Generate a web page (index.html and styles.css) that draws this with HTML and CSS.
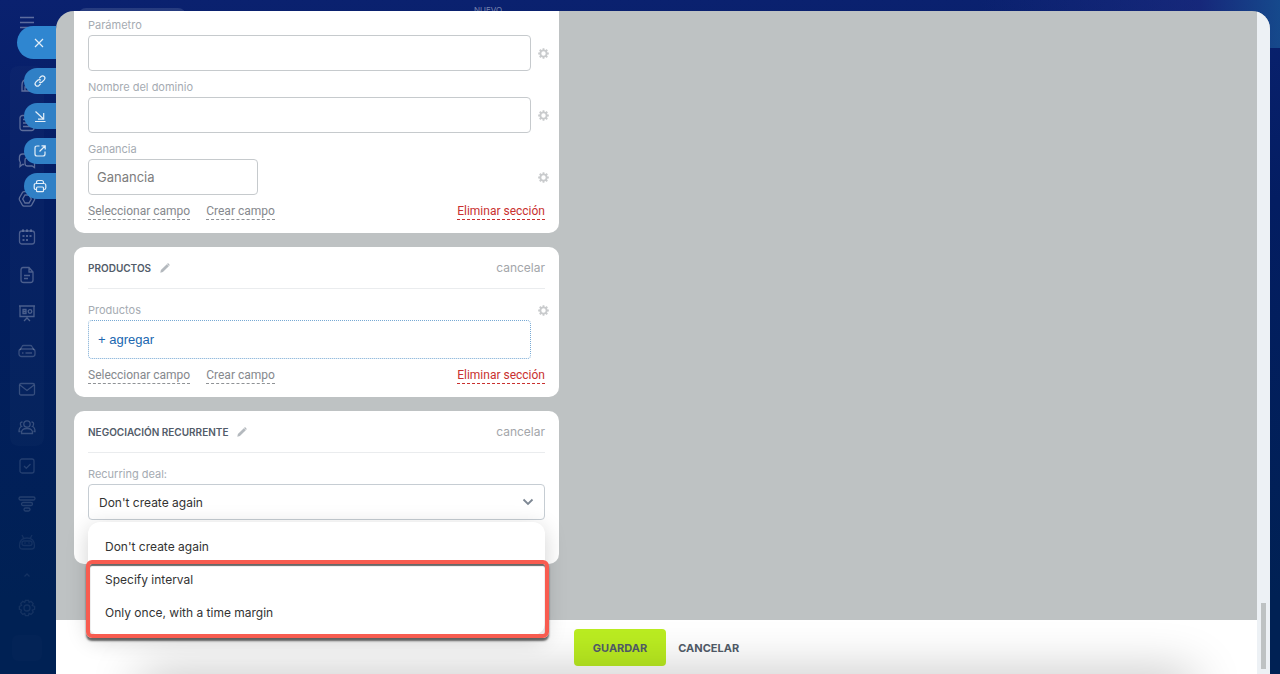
FILE: index.html
```
<!DOCTYPE html>
<html lang="es">
<head>
  <meta charset="UTF-8" />
  <meta name="viewport" content="width=device-width, initial-scale=1.0"/>
  <title>Negociación</title>
  <link rel="stylesheet" href="styles.css">
</head>
<body>

  <!-- Shared icons -->
  <svg class="sprite" aria-hidden="true">
    <symbol id="gear" viewBox="0 0 12 12">
      <circle cx="6" cy="6" r="3.4" fill="none" stroke="currentColor" stroke-width="2"/>
      <path d="M6 .2v2M6 9.800v2M.2 6h2M9.800 6h2M1.900 1.900l1.500 1.500M8.600 8.600l1.500 1.500M1.900 10.100l1.500-1.500M8.600 3.400l1.500-1.500" stroke="currentColor" stroke-width="2"/>
    </symbol>
    <symbol id="pencil" viewBox="0 0 10 10">
      <path d="M.3 9.700l.6-2.600L6.800 1.200l2 2-5.900 5.900zM7.400.6q.6-.6 1.200 0l.8.8q.6.600 0 1.200l-.3.300-2-2z" fill="currentColor"/>
    </symbol>
  </svg>

  <!-- Left menu -->
  <nav class="sidebar">
    <button class="side-item burger" aria-label="Menu">
      <svg viewBox="0 0 18 18"><path d="M2 4.500h14M2 9.500h14M2 14.500h14"/></svg>
    </button>
    <div class="side-group">
      <a href="#" class="side-item" aria-label="Feed"><svg viewBox="0 0 18 18"><path d="M4 15V9q0-5 5-6 5 1 5 6v6zM7 15v-4h4v4"/></svg></a>
      <a href="#" class="side-item" aria-label="News"><svg viewBox="0 0 18 18"><rect x="2" y="1.500" width="14" height="15" rx="2.500"/><path d="M5 5.500h5M5 9h8M5 12.500h8"/></svg></a>
      <a href="#" class="side-item" aria-label="Chat"><svg viewBox="0 0 18 18"><path d="M6 12.500H4.500L2 14.500l.3-4Q.8 8 1.500 4.500 2 2 4.500 2H10q2.500 0 2.500 2M8.500 6H14q2.500 0 2.500 2.500v7L14 14H9.500Q7 14 7 11.500V8q0-2 1.500-2z"/></svg></a>
      <a href="#" class="side-item" aria-label="Apps"><svg viewBox="0 0 18 18"><path d="M6 1.700h6q1 0 1.600 1l2.900 5q.5 1 0 2.200l-2.900 5.200q-.6 1-1.600 1H6q-1 0-1.600-1L1.500 10q-.5-1.200 0-2.300l2.900-5q.6-1 1.600-1zM7 5h4l2.300 4L11 13H7L4.700 9z"/></svg></a>
      <a href="#" class="side-item" aria-label="Calendar"><svg viewBox="0 0 18 18"><rect x="1.500" y="3" width="15" height="13" rx="2.500"/><path d="M5 1v3M9 1v3M13 1v3"/><path d="M4.500 8h2M8 8h2M11.500 8h2M4.500 12h2M8 12h2" stroke-width="2"/></svg></a>
      <a href="#" class="side-item" aria-label="Documents"><svg viewBox="0 0 18 18"><path d="M5 1.500h6L15 6v8q0 2.500-2.500 2.500h-7Q3 16.500 3 14V4q0-2.500 2-2.500zM11 1.500V6h4M6 9.500h6M6 12.500h4"/></svg></a>
      <a href="#" class="side-item" aria-label="Boards"><svg viewBox="0 0 18 18"><path d="M1 2h16M2 2v10.500h14V2M5 5.500h3v4H5zM5 7.500h3M9 12.500V14M6 17l3-3 3 3"/><circle cx="12" cy="7.500" r="1.800"/></svg></a>
      <a href="#" class="side-item" aria-label="Drive"><svg viewBox="0 0 18 18"><path d="M2 8l2-3.500q.5-1 1.500-1h7q1 0 1.500 1L16 8"/><rect x="1" y="7" width="16" height="7.500" rx="2.500"/><path d="M4 11h1.500M7.500 11H14"/></svg></a>
      <a href="#" class="side-item" aria-label="Mail"><svg viewBox="0 0 18 18"><rect x="1.500" y="3.500" width="15" height="11.500" rx="1.500"/><path d="M2 5l7 5.500L16 5"/></svg></a>
      <a href="#" class="side-item" aria-label="Groups"><svg viewBox="0 0 18 18"><circle cx="9" cy="6" r="3.200"/><path d="M3.500 15.500q-.5-5 5.500-5t5.500 5zM4.500 4Q2 4 2.500 6.500q.2 1.500 1 2Q1 9.500 1 13.500h1.500M13.500 4q2.500 0 2 2.500-.2 1.500-1 2 2.500 1 2.500 5h-1.500"/></svg></a>
    </div>
    <a href="#" class="side-item dim" aria-label="Tasks"><svg viewBox="0 0 18 18"><rect x="2" y="2" width="14" height="14" rx="2"/><path d="M6 9l2.300 2.300L12.500 7"/></svg></a>
    <a href="#" class="side-item dim" aria-label="CRM"><svg viewBox="0 0 18 18"><rect x="1" y="2" width="16" height="3" rx="1.500"/><rect x="3.500" y="7.500" width="11" height="3" rx="1.500"/><rect x="6" y="13" width="6" height="3" rx="1.500"/></svg></a>
    <a href="#" class="side-item dimmer" aria-label="Robots"><svg viewBox="0 0 18 18"><path d="M4 2l1.500 3M14 2l-1.500 3M1.500 13q0-8 7.500-8t7.500 8q0 3-3 3h-9q-3 0-3-3z"/><rect x="4" y="8" width="10" height="4.500" rx="2"/><path d="M6.500 10.500l1-1M10.500 9.500l1 1"/></svg></a>
    <button class="side-item dimmer small" aria-label="More"><svg viewBox="0 0 18 18"><path d="M6.500 10.500L9 8l2.500 2.500"/></svg></button>
    <a href="#" class="side-item dimmer" aria-label="Settings"><svg viewBox="0 0 18 18"><circle cx="9" cy="9" r="3"/><path d="M7.500 1.300h3l.6 2 1.900-.9 2.200 2.200-.9 1.900 2.300.9v3l-2.300.8.900 2-2.200 2.200-1.900-.9-.7 2.200h-3l-.7-2.200-1.900.9-2.100-2.200.8-2-2.100-.8v-3l2.100-.9-.8-1.900 2.100-2.200 1.900.9z"/></svg></a>
    <div class="side-stub"></div>
  </nav>

  <!-- Page header behind the slider -->
  <header class="topbar">
    <div class="search"></div>
    <span class="badge">NUEVO</span>
  </header>

  <!-- Slider buttons -->
  <div class="slider-buttons">
    <button class="slider-btn close" aria-label="Cerrar"><svg viewBox="0 0 14 14"><path d="M3 3l8 8M11 3l-8 8"/></svg></button>
    <button class="slider-btn" aria-label="Copiar enlace"><svg viewBox="0 0 14 14"><path d="M6.200 4.300L8 2.500q1.600-1.400 3.200 0t0 3.300L9.300 7.700q-1.600 1.500-3.200 0M7.800 9.700L6 11.500q-1.600 1.400-3.200 0t0-3.300l1.900-1.900q1.600-1.500 3.200 0"/></svg></button>
    <button class="slider-btn" aria-label="Minimizar"><svg viewBox="0 0 14 14"><path d="M2.500 2.500l8 7.500M10.700 4v6.200H5M2 12.500h10.500"/></svg></button>
    <button class="slider-btn" aria-label="Abrir en ventana nueva"><svg viewBox="0 0 14 14"><path d="M6.500 2H4Q2 2 2 4v6q0 2 2 2h6q2 0 2-2V7.500M6.500 7.500L12 2M8.500 1.800h3.700v3.700"/></svg></button>
    <button class="slider-btn" aria-label="Imprimir"><svg viewBox="0 0 14 14"><path d="M3.500 4.500v-1q0-2 2-2h3q2 0 2 2v1M3.500 10.500H3q-1.800 0-1.800-1.800V6.500Q1.200 4.500 3 4.500h8q1.800 0 1.800 2v2.200q0 1.800-1.800 1.800h-.5"/><rect x="3.500" y="8" width="7" height="4.700" rx="1"/></svg></button>
  </div>

  <!-- Slider -->
  <div class="slider">
    <div class="slider-page">
      <main class="content">

        <section class="card card-cut">
          <div class="field">
            <label for="param">Parámetro</label>
            <div class="field-row">
              <input type="text" id="param">
              <button class="gear" aria-label="Configurar"><svg><use href="#gear"/></svg></button>
            </div>
          </div>
          <div class="field">
            <label for="domain">Nombre del dominio</label>
            <div class="field-row">
              <input type="text" id="domain">
              <button class="gear" aria-label="Configurar"><svg><use href="#gear"/></svg></button>
            </div>
          </div>
          <div class="field">
            <label for="gain">Ganancia</label>
            <div class="field-row">
              <input type="text" id="gain" class="short" placeholder="Ganancia">
              <button class="gear" aria-label="Configurar"><svg><use href="#gear"/></svg></button>
            </div>
          </div>
          <div class="links">
            <a href="#">Seleccionar campo</a>
            <a href="#">Crear campo</a>
            <a href="#" class="remove">Eliminar sección</a>
          </div>
        </section>

        <section class="card">
          <div class="card-header">
            <h2>Productos</h2>
            <button class="edit" aria-label="Editar"><svg><use href="#pencil"/></svg></button>
            <a href="#" class="cancel">cancelar</a>
          </div>
          <div class="field">
            <div class="field-row label-row">
              <span class="label">Productos</span>
              <button class="gear" aria-label="Configurar"><svg><use href="#gear"/></svg></button>
            </div>
            <button class="add">+ agregar</button>
          </div>
          <div class="links">
            <a href="#">Seleccionar campo</a>
            <a href="#">Crear campo</a>
            <a href="#" class="remove">Eliminar sección</a>
          </div>
        </section>

        <section class="card card-recurring">
          <div class="card-header">
            <h2>Negociación recurrente</h2>
            <button class="edit" aria-label="Editar"><svg><use href="#pencil"/></svg></button>
            <a href="#" class="cancel">cancelar</a>
          </div>
          <div class="field">
            <label for="recurring">Recurring deal:</label>
            <div class="select">
              <select id="recurring">
                <option>Don't create again</option>
                <option>Specify interval</option>
                <option>Only once, with a time margin</option>
              </select>
              <svg class="chevron" viewBox="0 0 12 8"><path d="M1.500 1.500L6 6l4.500-4.500"/></svg>
              <div class="menu">
                <button>Don't create again</button>
                <button>Specify interval</button>
                <button>Only once, with a time margin</button>
                <div class="highlight"></div>
              </div>
            </div>
          </div>
        </section>

      </main>

      <footer class="footer">
        <button class="save">Guardar</button>
        <button class="dismiss">Cancelar</button>
      </footer>
    </div>
    <div class="scrollbar"><div class="thumb"></div></div>
  </div>

</body>
</html>
```
FILE: styles.css
```
* {
  box-sizing: border-box;
  font-family: Inter, "Liberation Sans", sans-serif;
}
body {
  margin: 0;
  min-height: 100vh;
  display: grid;
  grid-template-columns: 56px 1fr 10px;
  grid-template-rows: 11px 1fr;
  position: relative;
  background:
    linear-gradient(to left, rgba(30, 100, 160, 0.6), rgba(40, 50, 140, 0.4) 80px, transparent 300px) top / 100% 48px no-repeat,
    linear-gradient(to bottom, #0a216f, #031d62 200px, #002154 600px);
}
button {
  padding: 0;
  border: none;
  background: none;
  cursor: pointer;
}
.sprite {
  position: absolute;
  width: 0;
  height: 0;
}

/* === Left menu === */
.sidebar {
  grid-row: 1 / 3;
  display: flex;
  flex-direction: column;
  align-items: center;
  padding: 3px 2px 0 0;
  color: rgba(255, 255, 255, 0.34);
}
.side-group {
  width: 34px;
  margin: 25px 0 1px;
  border-radius: 8px;
  background: rgba(255, 255, 255, 0.02);
}
.side-item {
  display: flex;
  align-items: center;
  justify-content: center;
  height: 38px;
  color: inherit;
}
.side-item svg {
  width: 18px;
  height: 18px;
  fill: none;
  stroke: currentColor;
  stroke-width: 1.3;
}
.side-group .side-item:nth-child(n+5) { color: rgba(255, 255, 255, 0.28); }
.side-group .side-item:nth-child(n+8) { color: rgba(255, 255, 255, 0.2); }
.dim { color: rgba(255, 255, 255, 0.14); }
.dimmer { color: rgba(255, 255, 255, 0.08); }
.small { height: 28px; }
.side-stub {
  width: 30px;
  height: 26px;
  margin-top: 8px;
  border-radius: 6px;
  background: rgba(255, 255, 255, 0.01);
}

/* === Header behind the slider === */
.topbar {
  grid-column: 2 / 4;
  display: flex;
  overflow: hidden;
}
.search {
  width: 108px;
  height: 30px;
  margin: 8px 0 0 22px;
  border-radius: 8px;
  background: rgba(255, 255, 255, 0.12);
}
.badge {
  margin: 4px 0 0 288px;
  font-size: 8px;
  line-height: 12px;
  color: rgba(255, 255, 255, 0.45);
}

/* === Slider buttons === */
.slider-buttons {
  position: absolute;
  top: 26px;
  left: 0;
  width: 56px;
  display: flex;
  flex-direction: column;
  align-items: flex-end;
  gap: 9px;
}
.slider-btn {
  display: flex;
  align-items: center;
  width: 32px;
  height: 26px;
  padding-left: 9px;
  border-radius: 13px 0 0 13px;
  background: #3080c6;
}
.slider-btn.close {
  width: 39px;
  height: 33px;
  padding-left: 15px;
  border-radius: 17px 0 0 17px;
  background: #2f86d0;
}
.slider-btn svg {
  width: 14px;
  height: 14px;
  fill: none;
  stroke: #e3eef8;
  stroke-width: 1.2;
}

/* === Slider === */
.slider {
  display: flex;
  overflow: hidden;
  border-radius: 18px 18px 0 0;
  background: #bec2c3;
}
.slider-page {
  flex: 1;
  display: flex;
  flex-direction: column;
}
.content {
  flex: 1;
  display: flex;
  flex-direction: column;
  gap: 14px;
  width: 485px;
  margin-left: 18px;
}
.card {
  padding: 0 14px 13px;
  border-radius: 10px;
  background: white;
}
.card-cut {
  padding-top: 7px;
  border-radius: 0 0 10px 10px;
}
.card-header {
  display: flex;
  align-items: center;
  height: 42px;
  margin-bottom: 14px;
  border-bottom: 1px solid #eaecee;
}
.card-header h2 {
  margin: 0;
  font-size: 10px;
  font-weight: 600;
  text-transform: uppercase;
  color: #525c69;
}
.edit {
  display: flex;
  margin-left: 9px;
  color: #b4b9be;
}
.edit svg {
  width: 10px;
  height: 10px;
}
.cancel {
  margin-left: auto;
  font-size: 12px;
  text-decoration: none;
  color: #a3a6aa;
}

/* === Fields === */
.field { margin-bottom: 9px; }
.field label,
.label {
  display: block;
  margin-bottom: 3px;
  font-size: 11px;
  line-height: 14px;
  color: #a5abb2;
}
.field-row {
  display: flex;
  align-items: center;
  justify-content: space-between;
  gap: 7px;
  margin-right: -4px;
}
.label-row { margin-bottom: 3px; }
.label-row .label { margin-bottom: 0; }
.field input {
  flex: 1;
  min-width: 0;
  height: 36px;
  padding: 0 8px;
  border: 1px solid #c6cacd;
  border-radius: 4px;
  font-size: 13px;
  color: #333;
}
.field input.short {
  flex: none;
  width: 170px;
}
.field input::placeholder { color: #7d7d7d; }
.gear {
  display: flex;
  color: #c9cbcd;
}
.gear svg {
  width: 11px;
  height: 11px;
}
.add {
  display: block;
  width: calc(100% - 14px);
  height: 39px;
  padding-left: 9px;
  border: 1px dotted #77a9d4;
  border-radius: 4px;
  text-align: left;
  font-family: "Liberation Sans", sans-serif;
  font-size: 13px;
  color: #2067b0;
}
.links {
  display: flex;
  gap: 16px;
  font-size: 12px;
  line-height: 15px;
}
.links a {
  border-bottom: 1px dashed #8f9296;
  font-family: Roboto, sans-serif;
  text-decoration: none;
  color: #85888d;
}
.links .remove {
  margin-left: auto;
  border-color: #c9302f;
  color: #c9302f;
}

/* === Recurring drop-down === */
.card-recurring { padding-bottom: 35px; }
.select { position: relative; }
.select select {
  display: block;
  width: 100%;
  height: 36px;
  padding: 0 10px;
  appearance: none;
  border: 1px solid #c6cdd3;
  border-radius: 4px;
  background: white;
  font-size: 12px;
  color: #333;
}
.chevron {
  position: absolute;
  top: 14px;
  right: 11px;
  width: 12px;
  height: 8px;
  fill: none;
  stroke: #7d8793;
  stroke-width: 1.8;
}
.menu {
  position: absolute;
  z-index: 2;
  top: 38px;
  left: 0;
  width: 100%;
  padding: 8px 0 6px;
  border-radius: 12px;
  background: white;
  box-shadow: 0 5px 22px rgba(0, 0, 0, 0.18);
}
.menu button {
  display: block;
  width: 100%;
  height: 33px;
  padding-left: 17px;
  text-align: left;
  font-size: 12px;
  color: #333;
}
.highlight {
  position: absolute;
  top: 38px;
  right: -4px;
  bottom: -3px;
  left: -2px;
  border: 4px solid #f85c50;
  border-radius: 6px;
  box-shadow: 0 3px 2px rgba(40, 40, 40, 0.7), inset 0 2px 1px rgba(40, 40, 40, 0.7);
  pointer-events: none;
}

/* === Footer === */
.footer {
  position: relative;
  display: flex;
  justify-content: center;
  align-items: flex-start;
  gap: 12px;
  height: 54px;
  padding-top: 9px;
  overflow: hidden;
  background: white;
}
.footer::after {
  content: "";
  position: absolute;
  right: 80px;
  bottom: -24px;
  left: 100px;
  height: 10px;
  box-shadow: 0 0 50px 16px rgba(0, 0, 0, 0.24);
  pointer-events: none;
}
.footer button {
  height: 37px;
  font-size: 11px;
  font-weight: 700;
  text-transform: uppercase;
  color: #525c69;
}
.footer .save {
  padding: 0 19px;
  border-radius: 4px;
  background: #bbed21;
}

/* === Scrollbar === */
.scrollbar {
  display: flex;
  align-items: flex-end;
  width: 13px;
  padding: 0 4px 5px;
  background: #edf1f5;
}
.thumb {
  width: 5px;
  height: 66px;
  background: #bec2c3;
}
```
